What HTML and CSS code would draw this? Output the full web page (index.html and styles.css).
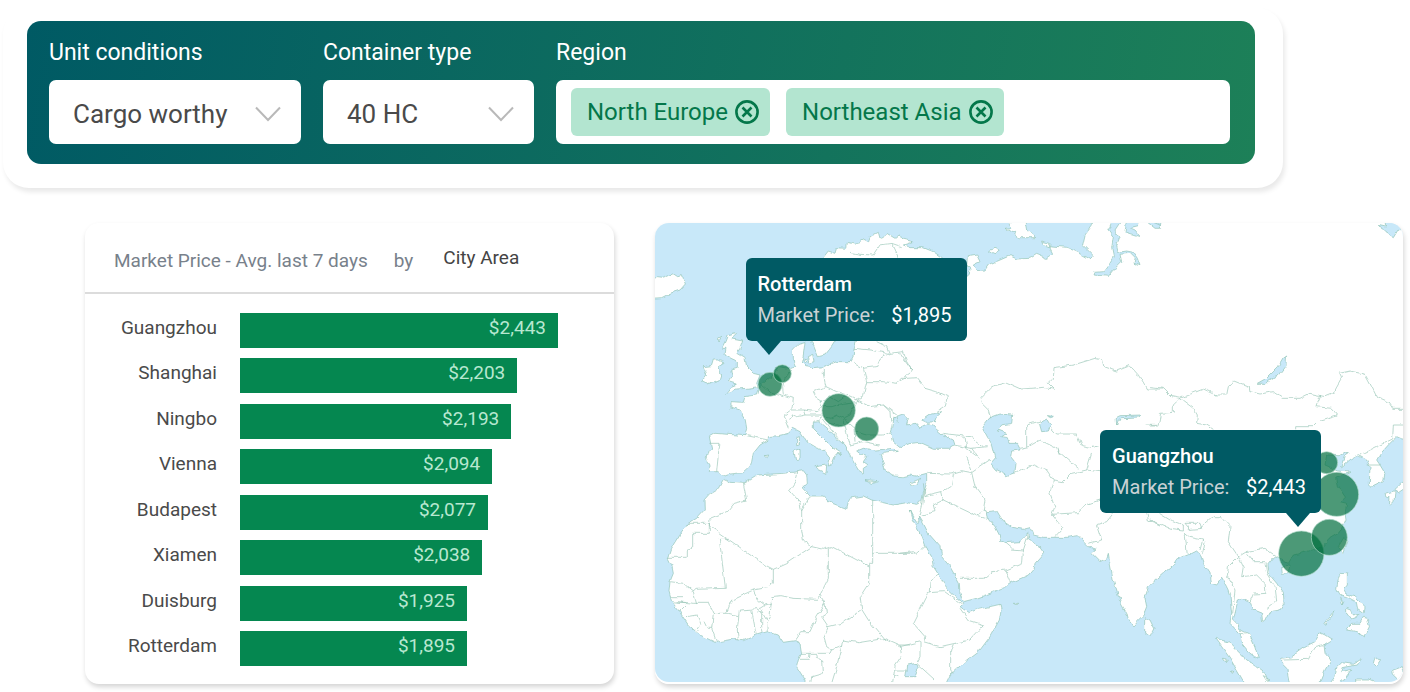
FILE: index.html
```html
<!DOCTYPE html>
<html lang="en">
<head>
<meta charset="utf-8">
<title>Market prices</title>
<link rel="stylesheet" href="styles.css">
</head>
<body>
<form class="filters">
  <div class="filter-bar">
    <div class="field field-unit">
      <label for="unit">Unit conditions</label>
      <div class="select-box">
        <select id="unit"><option>Cargo worthy</option></select>
        <svg class="chevron" viewBox="0 0 26 16" aria-hidden="true"><path d="M1 1.500L13 14 25 1.500"/></svg>
      </div>
    </div>
    <div class="field field-type">
      <label for="type">Container type</label>
      <div class="select-box">
        <select id="type"><option>40 HC</option></select>
        <svg class="chevron" viewBox="0 0 26 16" aria-hidden="true"><path d="M1 1.500L13 14 25 1.500"/></svg>
      </div>
    </div>
    <div class="field field-region">
      <label for="region">Region</label>
      <div class="tag-box">
        <span class="tag">North Europe
          <button type="button" aria-label="Remove North Europe"><svg viewBox="0 0 24 24"><circle cx="12" cy="12" r="10.600"/><path d="M7.500 7.500l9 9M16.500 7.500l-9 9"/></svg></button>
        </span>
        <span class="tag">Northeast Asia
          <button type="button" aria-label="Remove Northeast Asia"><svg viewBox="0 0 24 24"><circle cx="12" cy="12" r="10.600"/><path d="M7.500 7.500l9 9M16.500 7.500l-9 9"/></svg></button>
        </span>
        <input id="region" type="text">
      </div>
    </div>
  </div>
</form>

<main class="panels">
  <section class="chart">
    <header class="chart-head">
      <span>Market Price - Avg. last 7 days</span>
      <label for="group">by</label>
      <select id="group"><option>City Area</option></select>
    </header>
    <ul class="bars">
      <li><span class="city">Guangzhou</span><span class="track"><span class="bar" style="width:100%">$2,443</span></span></li>
      <li><span class="city">Shanghai</span><span class="track"><span class="bar" style="width:87.2%">$2,203</span></span></li>
      <li><span class="city">Ningbo</span><span class="track"><span class="bar" style="width:85.3%">$2,193</span></span></li>
      <li><span class="city">Vienna</span><span class="track"><span class="bar" style="width:79.3%">$2,094</span></span></li>
      <li><span class="city">Budapest</span><span class="track"><span class="bar" style="width:78%">$2,077</span></span></li>
      <li><span class="city">Xiamen</span><span class="track"><span class="bar" style="width:76.2%">$2,038</span></span></li>
      <li><span class="city">Duisburg</span><span class="track"><span class="bar" style="width:71.4%">$1,925</span></span></li>
      <li><span class="city">Rotterdam</span><span class="track"><span class="bar" style="width:71.4%">$1,895</span></span></li>
    </ul>
  </section>

  <section class="map" aria-label="Price map">
    <svg class="map-art" viewBox="15 24 2244 1377" preserveAspectRatio="xMidYMid slice" aria-hidden="true">
      <defs>
        <filter id="rough" x="0" y="0" width="2300" height="1440" filterUnits="userSpaceOnUse">
          <feTurbulence type="fractalNoise" baseFrequency="0.045" numOctaves="2" seed="4"/>
          <feDisplacementMap in="SourceGraphic" scale="14" xChannelSelector="R" yChannelSelector="G"/>
        </filter>
      </defs>
      <g filter="url(#rough)">
        <!-- Europe, Asia and Africa -->
        <path class="land" d="M520,127 535,108 555,115 560,98 590,100 592,82 615,88 640,72 655,80 660,65 685,52 690,70 712,56 735,70 750,58 755,72 790,80 760,90 780,98 820,98 850,110 875,127 900,150 950,160 952,125 980,120 990,140 970,150 980,167 1005,165 1015,150 1050,135 1080,122 1100,132 1140,130 1160,118 1190,130 1208,118 1195,92 1250,97 1290,115 1320,132 1330,122 1298,90 1305,60 1327,30 1327,-20 2400,-20 2400,668
          2256,672 2240,665 2215,690 2190,718 2180,735 2190,750 2205,775 2200,800 2165,817 2158,805 2160,755 2150,735 2125,722 2100,735 2075,755 2085,725 2095,710 2070,722 2030,720 2025,750 2060,765 2100,768 2080,780 2060,790 2065,815 2085,845 2070,860 2090,865 2085,895 2088,915 2080,935 2065,955 2040,970 2020,995 1970,1010 1930,1020 1915,1045 1895,1035 1870,1025
          1850,1050 1855,1075 1880,1105 1900,1135 1902,1165 1890,1185 1860,1190 1850,1210 1838,1220 1835,1195 1810,1185 1800,1160 1775,1150 1765,1155 1755,1195 1750,1215 1765,1230 1770,1245 1800,1260 1815,1295 1825,1330 1800,1315 1775,1285 1768,1255 1740,1225 1745,1195 1740,1145 1730,1115 1715,1090 1700,1110 1685,1105 1680,1075 1660,1045 1650,1015 1640,1005 1610,1020 1585,1030 1570,1050 1540,1075
          1495,1115 1485,1150 1490,1175 1480,1200 1465,1215 1450,1232 1435,1215 1430,1195 1410,1160 1390,1095 1380,1045 1375,1015 1370,1030 1350,1040 1325,1015 1340,1003 1315,995 1300,980 1285,962 1250,967 1180,967 1150,960 1140,938 1120,943 1085,937 1060,920 1040,887 1012,890 1015,910 1035,935 1048,960 1052,977 1065,983 1110,980 1125,965 1133,953 1135,967 1150,985 1170,995 1183,1013 1155,1045 1152,1060 1135,1080 1080,1105 1070,1115 1020,1135 980,1150 940,1160
          930,1135 928,1105 900,1055 875,1025 870,995 835,955 820,925 808,905 810,920 800,922 785,900 778,885 785,910 810,955 825,995 845,1025 850,1055 870,1085 880,1105 905,1135 935,1160 940,1167 930,1175 955,1193 985,1183 1050,1168 1053,1185 1048,1215 1020,1265 990,1305 950,1335 900,1380 888,1405 860,1450 465,1450
          465,1395 440,1355 445,1335 455,1315 450,1285 435,1277 400,1282 385,1260 352,1250 320,1260 280,1277 250,1272 195,1282 150,1260 115,1230 85,1185 65,1160 57,1130 60,1100 70,1075 65,1050 55,1030 65,1000 90,960 115,925 140,910 163,885 162,855 180,835 205,820 220,793 240,802 280,805 320,780 400,775 440,770 460,767 470,780 472,805 458,820 480,843 520,843 535,860 560,870 590,880 598,850 640,843 665,855 730,870 770,863 800,868 815,860 820,835 830,805 830,775 800,783 780,780
          760,785 735,783 705,765 700,745 690,720 700,712 745,706 730,700 680,705 640,700 620,708 630,716 650,725 640,740 655,750 640,760 640,775 625,765 610,740 600,720 585,692 560,670 535,645 505,620 490,622 490,640 510,660 530,680 550,700 575,715 560,716 555,725 545,750 535,753 540,730 520,705 500,698 470,680 450,650 430,640 415,655 385,662 355,665 355,675 330,690 310,715 305,740 300,755 280,773 240,777 220,785 205,770 178,770 180,750 170,735 178,705
          185,700 178,665 195,655 285,662 290,640 285,610 270,585 240,575 240,560 280,562 285,545 320,540 325,520 345,500 370,480 385,455 420,460 440,455 430,430 430,400 445,385 465,380 460,420 455,440 470,455 490,458 520,455 560,440 600,440 610,420 612,400 620,375 640,360 640,250 560,250 556,378 545,395 525,420 505,425 487,380 485,250Z"/>
        <!-- European and western islands -->
        <path class="land" d="M0,190 20,188 35,190 50,185 68,177 80,185 97,182 106,207 90,225 60,235 35,248 0,250Z
          M232,362 262,355 245,372 278,378 270,400 260,415 285,430 290,455 310,475 330,480 320,505 325,515 290,520 260,522 230,535 245,515 262,508 235,500 250,480 245,465 262,460 262,440 240,430 225,420 228,400 215,400 225,380Z
          M215,435 222,445 205,455 215,480 210,495 170,507 155,500 170,480 160,455 185,452 190,435Z
          M205,370 215,364 207,378Z M472,425 488,418 492,440 478,444Z M462,430 470,432 468,442 462,440Z
          M440,668 448,665 448,690 440,692Z M432,708 450,700 450,735 437,737Z M495,755 530,750 528,775 500,762Z M345,722 356,720 352,728Z
          M645,797 685,800 665,805Z M780,805 812,790 800,808 785,810Z M1090,1162 1103,1162 1098,1166Z M1484,1208 1500,1215 1512,1240 1500,1263 1484,1255Z
          M1075,20 1085,38 1065,40 1085,52 1100,52 1097,62 1108,68 1157,68 1130,45 1125,20Z M1015,108 1035,100 1048,105 1030,118Z M1175,78 1200,85 1198,95 1178,88Z"/>
        <!-- East Asian islands -->
        <g transform="translate(1500 705)">
          <path class="land" d="M395,350 420,345 415,368 397,370Z M580,265 592,270 578,308 565,290Z
            M572,370 592,372 592,405 580,420 588,432 615,440 642,470 640,488 622,475 618,455 590,440 572,435 568,430 560,415 565,385Z
            M590,475 605,480 610,495 628,490 620,505 605,510 590,490Z M572,445 582,455 578,462Z
            M590,535 605,520 630,520 640,502 652,505 658,530 642,562 622,545 592,540Z M522,520 548,488 552,484 546,498 524,523Z
            M197,565 235,575 290,630 345,670 362,710 290,710 240,625 215,590Z M220,628 232,630 226,638Z M244,662 252,665 246,670Z M340,680 360,690 350,695Z
            M395,625 425,620 465,590 495,575 510,548 525,555 547,570 522,585 525,610 542,630 525,660 505,710 420,710 410,655 395,640Z
            M560,650 575,635 610,640 635,625 622,645 580,652 575,665 605,658 585,685 565,700 540,700 555,680Z
            M670,640 676,618 680,630 692,632 680,650Z M725,662 757,650 775,700 745,690 727,672Z M620,690 655,690 680,700 620,705Z
            M708,130 735,122 732,155 718,168 720,145 710,140Z M735,118 760,95 765,112 742,128Z"/>
        </g>
        <!-- Inland seas, gulfs and lakes -->
        <g transform="translate(750 0)">
          <path class="sea" d="M0,600 -18,608 -22,635 -28,655 -22,680 0,698 30,685 60,682 100,700 150,700 165,690 160,675 130,660 100,635 85,628 60,640 48,625 20,630 25,610 10,597Z
            M65,615 90,598 128,590 110,605 105,620 80,622Z
            M245,635 265,610 300,597 338,600 335,625 305,630 295,645 320,655 305,665 325,668 330,685 350,685 360,705 335,708 332,725 348,745 345,773 320,782 290,767 272,745 285,730 275,690 260,665Z
            M418,625 440,612 452,632 445,648 425,650Z M650,630 648,608 660,602 725,600 720,606 665,608 655,615Z M442,602 460,604 455,608Z
            M640,10 625,45 640,65 635,100 640,125 625,150 610,170 585,172 582,180 625,184 640,165 665,140 660,118 690,115 705,130 702,145 720,152 712,130 700,112 680,108 655,112 650,90 658,70 645,45 668,10Z
            M680,10 675,50 690,55 722,65 705,45 690,38 715,32 720,10Z M735,10 780,38 785,10Z M200,150 210,158 208,178 200,185Z
            M20,1350 50,1345 55,1360 45,1385 14,1385Z"/>
        </g>
        <g transform="translate(1500 0)">
          <path class="sea" d="M-10,20 10,22 30,30 32,40 15,40Z M685,28 707,33 705,20 740,20 750,40 733,68 705,50Z M410,423 408,450 385,480 352,500 345,508 322,508 345,495 385,455 400,430Z"/>
        </g>
        <!-- Country borders -->
        <path class="line" d="M600,112 630,118 670,120 690,90 725,85 755,95M725,85 745,127M520,455V480L528,515 490,530 500,550 515,560M528,515 560,530 590,540 622,555 640,545 650,500 640,460 610,445M612,400 660,405 715,415M640,460 680,455 690,430 718,415 710,395 680,380M718,415 760,410 770,440 785,465M650,500H700L740,505 750,490H770M620,555 660,575 700,570 740,600 745,620M700,570 720,590 722,620 740,605M425,465 405,490 398,515 400,540 430,550 425,585M330,505 365,535 400,545M425,585 400,605 405,615 415,640M425,585H460L465,600 440,605 430,600 415,610M460,585 500,590 515,575 510,560 540,545 565,560 585,545M515,575 545,575 580,565 620,560M465,600H515M490,620 520,605 540,610 560,600 580,610M520,615 540,640 565,670M535,625 575,632M620,560 600,600 580,610 590,650 600,690M615,650 650,660 700,660 722,650M600,690 640,680 690,690M580,610 615,640 618,680M290,662 355,675M178,685H210L205,720 200,770"/>
        <path class="line" transform="translate(750 0)" d="M0,415 20,445 35,465 15,480 20,490 50,488 75,520 110,530 142,545 135,575 110,592M20,490 0,500M272,610 265,585 245,565 240,550 275,515 320,502 365,522 430,517 463,523 445,505 460,490 462,458 520,450 585,430 608,435 612,455 650,468 690,452 715,480 740,522H790M130,655 180,662 210,665 250,695M165,690 215,700 260,695M215,700 230,720M380,695V630L420,618M455,640 470,657H530L545,695 570,700 600,690M360,700 385,695 420,675 470,700 480,720M740,630H780M195,665 200,700 240,730"/>
        <path class="line" transform="translate(1500 0)" d="M0,515 40,520 65,545 90,550 160,522 200,540 230,540 235,515 252,497 298,515 300,530 330,537 370,530 400,550 450,550 480,535 525,545 550,535 575,490 568,475 600,468 645,478 665,515 680,545 715,560 728,580H770M90,550 70,570V592L32,595 25,628H0M90,550 130,580 142,600 140,625 170,630 190,643M512,540 498,575 545,580 562,600 510,615 490,635H437V643M767,630H730L728,672 690,690 630,720"/>
        <path class="line" transform="translate(0 705)" d="M440,65 435,95 418,120 448,155 455,180 478,140M455,180V240L460,270 485,290M280,100 290,150 250,160 230,185 180,205 178,228 345,345 370,358 410,340 485,290 520,298 545,290 655,348M115,220H178V250H128V290L112,300V322H55M238,265H208L226,412 135,415 125,425M668,150V340H656V400L630,440 635,478 655,510 705,570M668,310H790M535,295V385L510,435M370,358V400L350,413 310,420 245,450 230,488M437,570 455,545H480L500,500 525,460 510,435 500,448 430,445 390,437 365,440 360,500 350,520 352,545M310,420 325,450 345,465 365,460M525,460 530,490 515,500 535,530 575,520 635,478M535,530 522,560 530,590 545,600 575,588 578,570 625,578 705,565 750,585H780M575,588 560,650 545,700M455,610H540L545,598M480,610 478,628H450M500,610 502,625 518,630 520,670 485,680 482,700M750,585 755,620 735,650 728,700M265,570 262,540 268,480 300,478 330,475 345,465M305,480 318,550M318,480 335,490V548M330,478 350,510M265,497 235,490H190L178,460H130L80,455M190,490 185,535 200,577M60,395 100,400 130,425 140,463M62,440H100M62,455 105,458M110,500 140,495 152,520 140,540M165,515 175,535 185,535M85,485 105,465M735,660H770M730,675 745,680"/>
        <path class="line" transform="translate(750 705)" d="M82,70 150,72 185,62 215,68 255,40 270,30M160,72 155,105 125,128 75,140 70,100M125,128 130,150 100,165 105,185 65,195M72,130 68,165 60,195M68,165 60,155M130,150 235,200 260,205M215,68 225,110 255,150 250,180 262,185M235,200 245,185M200,20 215,60M180,385H250L275,365 318,360 368,340 370,300 335,297 315,280M318,360 332,395M370,300 385,255M345,70 400,45 440,60 460,90 450,130 465,170 455,193 535,188 555,165 600,150M455,193 488,235 465,260M460,90 490,95 515,70 560,60 600,65M470,0 535,55M560,60 575,10M640,190 620,215 590,225 605,270 565,280M740,190 745,210 780,225M0,310 40,305 50,312 75,290M115,375 90,395 88,425 40,520 75,560 70,575 120,590 210,570 252,525 205,510 180,475M88,425 130,422 185,462M160,583 152,600V660L160,670M0,590 60,575V620L50,640 105,690"/>
        <path class="line" transform="translate(1500 705)" d="M28,190 60,210 100,225V240L60,235 0,210M105,220H150L155,235 120,238ZM105,250 120,262 158,270 150,300M105,250 112,312M150,235 190,200H210L240,230 235,275 265,320 235,350 232,380 255,420 248,490M158,310 165,275M265,320 290,305 345,295 380,320M290,310 310,335H345M265,320 280,350 275,380 320,375 345,400 348,430 310,432 300,455M345,340 350,370 375,410 380,450 348,475M650,45H690M270,550 290,552M400,630 475,628 495,590 525,583"/>
      </g>
      <g class="pins">
        <circle cx="360" cy="508" r="36"/><circle cx="397" cy="476" r="27"/><circle cx="566" cy="586" r="50"/><circle cx="650" cy="642" r="36"/>
        <circle cx="2030" cy="743" r="33"/><circle cx="2060" cy="838" r="66"/><circle cx="1954" cy="1016" r="68"/><circle cx="2038" cy="967" r="54"/>
      </g>
    </svg>
    <div class="tip tip-rotterdam">
      <strong>Rotterdam</strong>
      <p><span>Market Price:</span><b>$1,895</b></p>
    </div>
    <div class="tip tip-guangzhou">
      <strong>Guangzhou</strong>
      <p><span>Market Price:</span><b>$2,443</b></p>
    </div>
  </section>
</main>
</body>
</html>
```
FILE: styles.css
```css
* { box-sizing: border-box; }

body {
  margin: 0;
  padding: 8px 7px 8px 3px;
  background: #fff;
  color: #4a4a4a;
  font-family: Roboto, "Liberation Sans", sans-serif;
  font-size: 20px;
}

button, input, select {
  font: inherit;
  color: inherit;
  border: 0;
  padding: 0;
  background: none;
  appearance: none;
}

/* Filters */
.filters {
  margin-right: 120px;
  padding: 13px 28px 24px 24px;
  border-radius: 26px;
  box-shadow: 2px 4px 5px rgba(0, 0, 0, .09);
}

.filter-bar {
  display: flex;
  gap: 22px;
  padding: 16px 25px 20px 22px;
  border-radius: 14px;
  background: linear-gradient(100deg, #005a64, #1d8058);
}

.field { min-width: 0; }
.field-unit { flex: 0 0 252px; }
.field-type { flex: 0 0 211px; }
.field-region { flex: 1; }

.field > label {
  display: block;
  height: 43px;
  color: #fff;
  font-size: 23px;
  line-height: 32px;
}

.select-box,
.tag-box {
  height: 64px;
  border-radius: 7px;
  background: #fff;
}

.select-box {
  display: grid;
  align-items: center;
}

.select-box select {
  grid-area: 1 / 1;
  width: 100%;
  height: 100%;
  padding: 4px 56px 0 24px;
  font-size: 26px;
}

.chevron {
  grid-area: 1 / 1;
  justify-self: end;
  width: 26px;
  height: 16px;
  margin: 4px 20px 0 0;
  pointer-events: none;
  fill: none;
  stroke: #b9b9b9;
  stroke-width: 2;
}

.tag-box {
  display: flex;
  align-items: center;
  gap: 16px;
  padding: 0 15px;
}

.tag {
  display: flex;
  flex: none;
  align-items: center;
  gap: 7px;
  height: 48px;
  padding: 0 11px 0 16px;
  border-radius: 6px;
  background: #b3e5d0;
  color: #04774a;
  font-size: 24px;
}

.tag button { display: flex; }

.tag svg {
  width: 24px;
  height: 24px;
  fill: none;
  stroke: #04774a;
  stroke-width: 2.6;
}

.tag-box input {
  flex: 1;
  min-width: 0;
  height: 48px;
}

/* Panels */
.panels {
  display: grid;
  grid-template-columns: 529fr 748fr;
  gap: 41px;
  margin: 35px 0 0 82px;
}

.chart,
.map {
  border-radius: 14px;
  box-shadow: 1px 3px 5px rgba(0, 0, 0, .17);
}

.chart {
  display: flex;
  flex-direction: column;
  font-size: 19px;
}

.chart-head {
  display: flex;
  align-items: center;
  gap: 26px;
  height: 71px;
  padding: 6px 0 0 29px;
  border-bottom: 2px solid #dcdcdc;
  color: #78818b;
}

.chart-head select {
  margin-left: 4px;
  padding-bottom: 6px;
  color: #444;
}

.bars {
  display: flex;
  flex: 1;
  flex-direction: column;
  justify-content: space-between;
  margin: 0;
  padding: 19px 56px 18px 0;
  list-style: none;
}

.bars li {
  display: flex;
  gap: 23px;
  line-height: 30px;
}

.city {
  flex: 0 0 132px;
  text-align: right;
}

.track { flex: 1; }

.bar {
  display: block;
  height: 35px;
  padding-right: 12px;
  background: #058750;
  color: #b8e8d0;
  text-align: right;
}

/* Map */
.map {
  position: relative;
  border-bottom: 2px solid #fff;
}

.map-art {
  display: block;
  width: 100%;
  height: 459px;
  border-radius: 14px;
  background: #c8e8f9;
}

.land {
  fill: #fff;
  stroke: #8fc2b4;
  stroke-width: 2;
}

.sea {
  fill: #c8e8f9;
  stroke: #8fc2b4;
  stroke-width: 2;
}

.line {
  fill: none;
  stroke: #98c6b7;
  stroke-width: 2;
}

.pins {
  fill: #006e3d;
  fill-opacity: .7;
  stroke: #b3dccb;
  stroke-width: 2;
}

.tip {
  position: absolute;
  padding: 11px 12px 10px;
  width: 221px;
  border-radius: 6px;
  background: #005a64;
  color: #fff;
  line-height: 31px;
}

.tip::after {
  content: "";
  position: absolute;
  top: 100%;
  left: 11px;
  border: 12px solid transparent;
  border-top: 14px solid #005a64;
  border-bottom: 0;
}

.tip strong {
  display: block;
  font-weight: 500;
}

.tip p {
  display: flex;
  justify-content: space-between;
  margin: 0;
  padding-right: 3px;
  color: #c9d2d5;
}

.tip b {
  color: #fff;
  font-weight: 400;
}

.tip-rotterdam { left: 12.1%; top: 35px; }
.tip-guangzhou { left: 59.5%; top: 207px; }
.tip-guangzhou::after { left: 186px; }
```
